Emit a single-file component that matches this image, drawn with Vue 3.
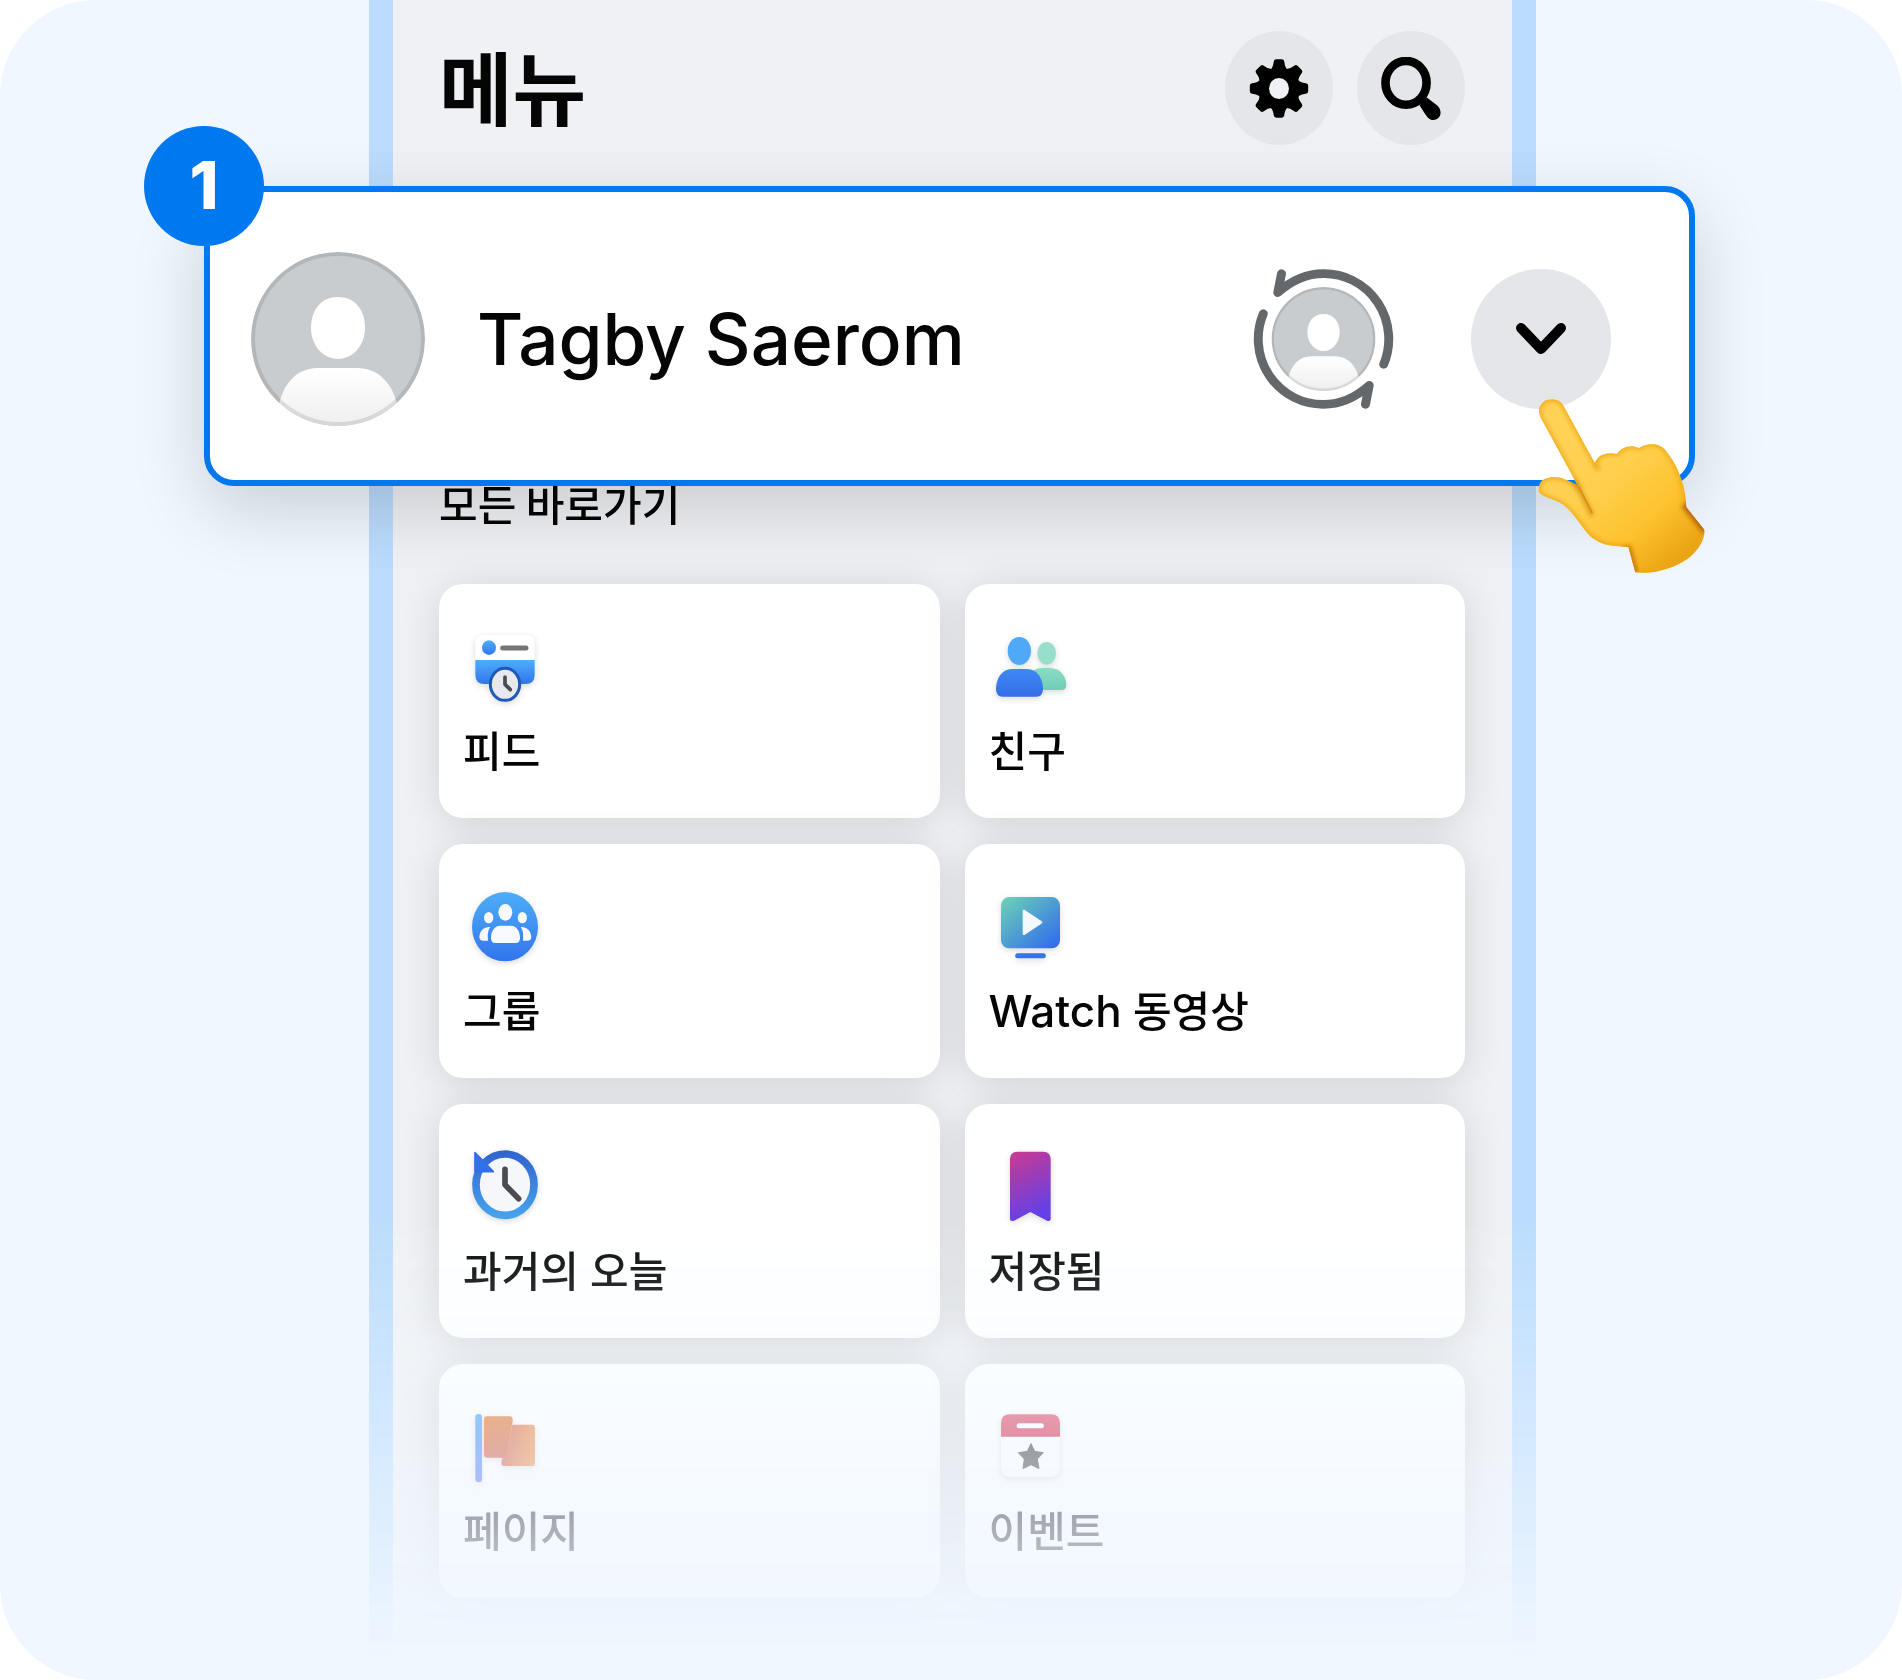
<template>
  <main class="stage">
    <section class="phone">
      <header class="top">
        <h1>메뉴</h1>
        <div class="actions">
          <button class="round" aria-label="설정">
            <svg viewBox="211 170 180 190" width="60" height="63" aria-hidden="true">
              <circle cx="301" cy="265" r="62" />
              <path v-for="n in 8" :key="n" :transform="`rotate(${n * 45} 301 265)`"
                    d="M285 184q1-7 8-7h16q7 0 8 7q2 18 11 25v20h-54v-20q9-7 11-25z" />
              <ellipse class="hole" cx="301" cy="265" rx="30" ry="32" />
            </svg>
          </button>
          <button class="round" aria-label="검색">
            <svg viewBox="606 170 180 190" width="60" height="63" aria-hidden="true">
              <ellipse cx="681" cy="248" rx="62" ry="66" fill="none" stroke="#000" stroke-width="26" />
              <path d="M722 316C728 304 736 296 744 292L777 318C796 342 778 360 764 360C750 360 744 349 738 341Z" />
            </svg>
          </button>
        </div>
      </header>

      <h2>모든 바로가기</h2>

      <nav class="tiles">
        <button v-for="t in tiles" :key="t.icon" class="tile">
          <svg class="icon" :viewBox="t.box" aria-hidden="true">
            <g v-if="t.icon === 'feed'">
              <path d="M136 270V220Q136 195 162 195H289Q314 195 314 220V270Z" fill="#fff" />
              <path d="M136 270H314V314Q314 342 286 342H164Q136 342 136 314Z" fill="url(#sky)" />
              <ellipse cx="177" cy="233" rx="21" ry="22" fill="url(#sky)" />
              <path d="M218 234H288" stroke="#757575" stroke-width="15" stroke-linecap="round" />
              <ellipse cx="225" cy="343" rx="44" ry="48" fill="#e8e9ee" stroke="#1f57bd" stroke-width="9" />
              <path d="M225 321V343L241 359" class="hand-line" stroke-width="11" />
            </g>
            <g v-else-if="t.icon === 'friends'">
              <ellipse cx="290" cy="250" rx="28" ry="34" fill="#98dfcb" />
              <path d="M240 360V315Q250 294 275 294H300C332 294 349 321 349 345Q349 360 334 360Z" fill="url(#mint)" />
              <ellipse cx="208" cy="243" rx="35" ry="42" fill="#4fa9f8" />
              <path d="M185 297H232C262 297 279 327 279 357Q279 380 259 380H158Q138 380 138 357C138 327 155 297 185 297Z" fill="url(#blue)" />
            </g>
            <g v-else-if="t.icon === 'groups'">
              <ellipse cx="225" cy="290" rx="99" ry="104" fill="url(#sky)" />
              <g fill="#f7f9fd">
                <ellipse cx="226" cy="247" rx="21" ry="25" />
                <ellipse cx="176" cy="263" rx="14" ry="17" />
                <ellipse cx="277" cy="263" rx="14" ry="17" />
                <path d="M210 287H243C260 287 270 304 270 324Q270 339 257 339H196Q183 339 183 324C183 304 193 287 210 287Z" />
                <path d="M181 291C172 303 173 318 174 332H160Q148 332 148 320C150 302 161 290 181 291Z" />
                <path d="M272 291C281 303 280 318 279 332H292Q304 332 304 320C302 302 291 290 272 291Z" />
              </g>
            </g>
            <g v-else-if="t.icon === 'watch'">
              <rect x="153" y="201" width="177" height="154" rx="25" fill="url(#screen)" />
              <path d="M222 243L273 277L222 311Z" fill="#f4f9ff" stroke="#f4f9ff" stroke-width="8" stroke-linejoin="round" />
              <path d="M203 377H280" stroke="#3a71e3" stroke-width="15" stroke-linecap="round" />
            </g>
            <g v-else-if="t.icon === 'memories'">
              <ellipse cx="225" cy="284" rx="87" ry="92" fill="#f5f7fa" stroke="url(#ring)" stroke-width="23" />
              <path d="M135 188L190 245H135Z" fill="#326fea" stroke="#326fea" stroke-width="5" stroke-linejoin="round" />
              <path d="M225 238V284L266 326" class="hand-line" stroke-width="17" />
            </g>
            <g v-else-if="t.icon === 'saved'">
              <path d="M202 185H280Q302 185 302 208V386Q302 396 291 392L241 366L192 392Q180 396 180 386V208Q180 185 202 185Z" fill="url(#plum)" />
            </g>
            <g v-else-if="t.icon === 'pages'">
              <rect x="346" y="192" width="20" height="205" rx="10" fill="url(#pole)" />
              <path d="M382 199H449Q460 199 458 214L440 323H382Q372 323 372 313V209Q372 199 382 199Z" fill="url(#flag)" />
              <path d="M457 224H516Q525 224 525 234V338Q525 348 516 348H432Q423 348 424 338L428 322Q440 315 444 295Z" fill="url(#flap)" />
            </g>
            <g v-else>
              <rect x="153" y="193" width="177" height="188" rx="27" fill="#fff" />
              <path d="M153 260V220Q153 193 180 193H303Q330 193 330 220V260Z" fill="url(#rose)" />
              <path d="M207 227H274" stroke="#fff" stroke-width="15" stroke-linecap="round" />
              <path d="M243 281L254 304L280 308L262 327L267 356L243 344L219 356L223 327L205 308L232 304Z" fill="#3d3f42" stroke="#3d3f42" stroke-width="3" stroke-linejoin="round" />
            </g>
          </svg>
          <span class="label"><span v-if="t.brand" class="latin">{{ t.brand }}</span> {{ t.label }}</span>
        </button>
      </nav>
    </section>

    <section class="profile">
      <span class="badge">1</span>
      <svg class="avatar" viewBox="0 0 174 174" aria-hidden="true"><use href="#person" /></svg>
      <strong class="name">Tagby Saerom</strong>
      <button class="switch" aria-label="프로필 전환">
        <svg viewBox="154 144 410 426" width="141" height="142" preserveAspectRatio="none" aria-hidden="true">
          <use href="#person" transform="translate(208 201) scale(1.736 1.793)" />
          <g fill="none" stroke="#65686a" stroke-width="26" stroke-linecap="round" stroke-linejoin="round">
            <path d="M237 161L226 218Q288 161 359 161A188 196 0 0 1 534 433" />
            <path d="M481 553L492 496Q430 553 359 553A188 196 0 0 1 184 281" />
          </g>
        </svg>
      </button>
      <button class="expand" aria-label="프로필 더 보기">
        <svg viewBox="0 0 50 32" width="50" height="32" aria-hidden="true">
          <path d="M5 5L25 26L45 5" fill="none" stroke="#000" stroke-width="10" stroke-linecap="round" stroke-linejoin="round" />
        </svg>
      </button>
      <svg class="pointer" viewBox="980 534 490 532" preserveAspectRatio="none" aria-hidden="true">
        <g filter="url(#soft)">
          <path class="skin" :d="handPath" />
          <g clip-path="url(#handclip)" fill="none">
            <path :d="handPath" stroke="#eda716" stroke-width="12" filter="url(#blur)" />
            <path d="M1085 783C1112 820 1122 850 1140 888" stroke="#c77a0a" stroke-width="8" filter="url(#blur)" />
            <path d="M1100 800L1140 880" stroke="#d98d0c" stroke-width="5" />
            <path d="M1148 732L1160 752" stroke="#d98d0c" stroke-width="6" filter="url(#blur)" />
            <path d="M1413 850L1475 930" stroke="#b8620b" stroke-width="34" filter="url(#blur)" />
            <path d="M1238 980L1262 1062" stroke="#c87508" stroke-width="24" filter="url(#blur)" />
          </g>
        </g>
      </svg>
    </section>

    <!-- shared shapes and gradients -->
    <svg class="defs" width="0" height="0" aria-hidden="true">
      <defs>
        <clipPath id="round"><circle cx="87" cy="87" r="87" /></clipPath>
        <clipPath id="handclip"><path :d="handPath" /></clipPath>
        <filter id="blur" x="-50%" y="-50%" width="200%" height="200%"><feGaussianBlur stdDeviation="7" /></filter>
        <filter id="soft"><feGaussianBlur stdDeviation="1" /></filter>
        <g id="person">
          <g clip-path="url(#round)">
            <circle cx="87" cy="87" r="87" fill="#c9ccce" />
            <path d="M87 45C104 45 114 58 114 76C114 93 102 107 87 107C72 107 60 93 60 76C60 58 70 45 87 45Z" fill="#fff" />
            <path d="M28 152C33 131 46 116 67 116H106C127 116 141 131 146 152V180H28Z" fill="url(#torso)" />
          </g>
          <circle cx="87" cy="87" r="85" fill="none" stroke="#000" stroke-opacity=".1" stroke-width="4" />
        </g>
        <linearGradient v-for="g in gradients" :id="g.id" :key="g.id" x1="0" y1="0" :x2="g.x" :y2="g.y">
          <stop offset="0" :stop-color="g.from" />
          <stop offset="1" :stop-color="g.to" />
        </linearGradient>
        <linearGradient id="skin" x1=".1" y1=".1" x2=".85" y2="1">
          <stop offset="0" stop-color="#ffd257" />
          <stop offset=".4" stop-color="#ffd04f" />
          <stop offset=".7" stop-color="#fdc22e" />
          <stop offset="1" stop-color="#e69d0e" />
        </linearGradient>
      </defs>
    </svg>
  </main>
</template>

<script setup>
const left = '99 162 240 240'
const right = '117 162 240 240'

const tiles = [
  { icon: 'feed', label: '피드', box: left },
  { icon: 'friends', label: '친구', box: right },
  { icon: 'groups', label: '그룹', box: left },
  { icon: 'watch', brand: 'Watch', label: '동영상', box: right },
  { icon: 'memories', label: '과거의 오늘', box: left },
  { icon: 'saved', label: '저장됨', box: right },
  { icon: 'pages', label: '페이지', box: '309 162 240 240' },
  { icon: 'events', label: '이벤트', box: right },
]

const gradients = [
  { id: 'sky', x: 0, y: 1, from: '#4eaef9', to: '#3274ed' },
  { id: 'blue', x: 0, y: 1, from: '#4088f6', to: '#346fe5' },
  { id: 'mint', x: 0, y: 1, from: '#8ddbc6', to: '#6fcdb9' },
  { id: 'screen', x: 1, y: 1, from: '#6cd5b4', to: '#2f66f0' },
  { id: 'ring', x: 0, y: 1, from: '#3166cf', to: '#45a2ee' },
  { id: 'plum', x: 0.3, y: 1, from: '#cb3a90', to: '#6540e6' },
  { id: 'pole', x: 0, y: 1, from: '#45a8f5', to: '#4a6cf0' },
  { id: 'flag', x: 0, y: 1, from: '#e07a2f', to: '#cf5540' },
  { id: 'flap', x: 1, y: 0, from: '#d15d45', to: '#ee8f45' },
  { id: 'rose', x: 0, y: 1, from: '#e05370', to: '#d8304c' },
  { id: 'torso', x: 0, y: 1, from: '#ffffff', to: '#ededee' },
]

const handPath = 'M1022 538C1040 538 1050 545 1056 556L1148 730C1155 705 1180 695 1212 702C1225 682 1250 673 1275 684C1300 668 1335 668 1352 690C1385 733 1395 765 1405 800C1411 828 1412 845 1413 862L1465 930C1468 950 1455 985 1420 1015C1380 1045 1320 1065 1265 1058L1245 982C1190 978 1165 978 1130 945C1105 915 1090 885 1060 858C1040 840 1010 838 990 822C980 810 984 795 995 782C1010 770 1040 768 1060 778C1075 784 1085 789 1098 797L990 592C984 578 984 565 992 553C1000 542 1010 538 1022 538Z'
</script>

<style>
body { background: #fff; }
</style>

<style scoped>
.stage { position: relative; box-sizing: border-box; padding: 0 366px 0 369px; overflow: hidden; border-radius: 96px; background: #f0f7ff; color: #050505; font-family: Inter, "Noto Sans CJK KR", sans-serif; }
button { padding: 0; border: 0; color: inherit; font: inherit; cursor: pointer; }
svg { display: block; flex: none; }

.phone { border: solid #bbdcfd; border-width: 0 24px; padding: 31px 47px 82px 46px; background: #f0f1f4; mask-image: linear-gradient(#000 1220px, transparent 1660px); }
.top { display: flex; align-items: center; justify-content: space-between; height: 114px; }
h1 { margin: 0; padding-bottom: 8px; font-size: 80px; line-height: 106px; font-weight: 700; font-family: "Noto Sans CJK KR", sans-serif; }
.actions { display: flex; gap: 24px; }
.round { display: flex; align-items: center; justify-content: center; width: 108px; height: 114px; border-radius: 50%; background: #e5e6e9; }
.hole { fill: #f0f1f4; }
h2 { margin: 328px 0 51px; font-size: 42px; line-height: 60px; font-weight: 500; font-family: "Noto Sans CJK KR", sans-serif; }

.tiles { display: grid; grid-template-columns: 1fr 1fr; gap: 26px 25px; }
.tile { display: flex; flex-direction: column; align-items: flex-start; gap: 18px; padding: 40px 24px 36px; border-radius: 24px; background: #fff; box-shadow: 0 4px 40px rgba(0, 0, 0, .13); }
.icon { width: 80px; height: 80px; overflow: visible; filter: drop-shadow(0 2px 3px rgba(0, 0, 0, .15)); }
.hand-line { fill: none; stroke: #4b4c4f; stroke-linecap: round; stroke-linejoin: round; }
.label { font-size: 42px; line-height: 60px; font-weight: 500; white-space: nowrap; }
.latin { font-size: 44px; line-height: 1; }

.profile { position: absolute; top: 186px; left: 204px; right: 207px; display: flex; align-items: center; box-sizing: border-box; height: 300px; padding: 6px 78px 0 41px; border: 6px solid #0078f0; border-radius: 30px; background: #fff; box-shadow: 0 24px 72px rgba(0, 0, 0, .16); }
.badge { position: absolute; top: -66px; left: -66px; width: 120px; height: 120px; border-radius: 50%; background: #0078f0; color: #fff; font-size: 66px; line-height: 118px; font-weight: 800; text-align: center; }
.avatar { width: 174px; height: 174px; }
.name { flex: 1; margin-left: 52px; font-size: 71px; line-height: 96px; font-weight: 500; white-space: nowrap; }
.switch { background: none; }
.expand { display: flex; align-items: center; justify-content: center; width: 140px; height: 140px; margin-left: 77px; border-radius: 50%; background: #e5e6ea; }
.pointer { position: absolute; top: 206px; right: -17px; width: 169px; height: 177px; }
.skin { fill: url(#skin); }
.defs { position: absolute; }
</style>
